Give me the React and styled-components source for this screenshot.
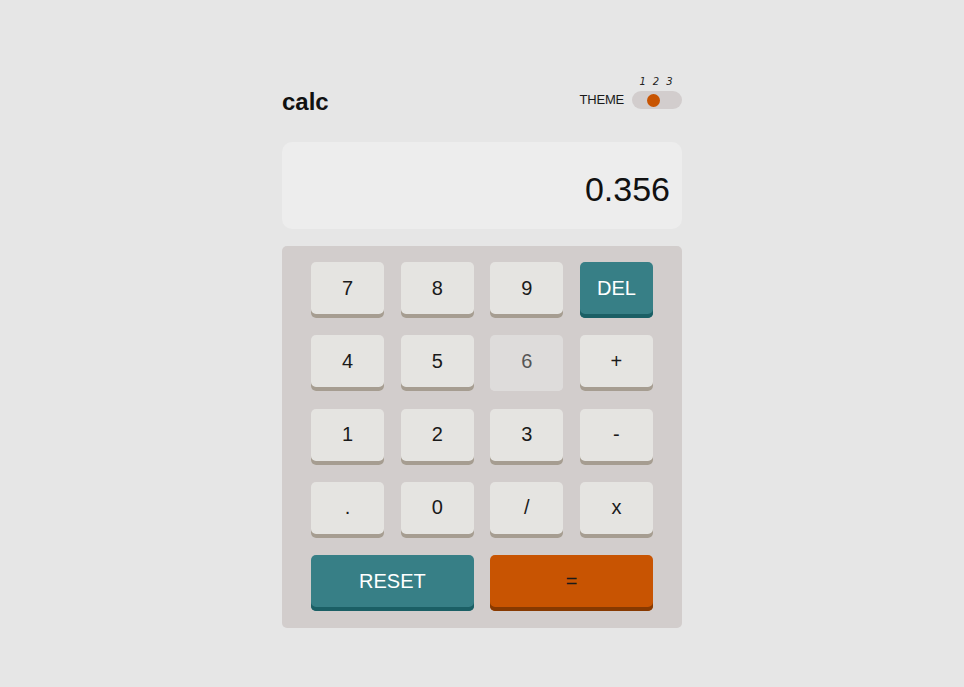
import styled, { createGlobalStyle } from 'styled-components';

const GlobalStyle = createGlobalStyle`
  * { box-sizing: border-box; }
  body {
    margin: 0;
    background: #e6e6e6;
    font-family: "Liberation Sans", Arial, sans-serif;
    color: #1a1a1a;
  }
`;

const Page = styled.main`
  min-height: 100vh;
  display: flex;
  justify-content: center;
  padding-top: 76px;
`;

const Calculator = styled.div`
  width: 400px;
`;

const Header = styled.header`
  display: flex;
  justify-content: space-between;
  align-items: flex-end;
`;

const Logo = styled.h1`
  margin: 0 0 -5px;
  font-size: 24px;
  line-height: 24px;
  font-weight: 700;
  color: #111;
`;

const ThemeSwitch = styled.div`
  display: flex;
  align-items: flex-end;
  gap: 8px;
`;

const ThemeLabel = styled.span`
  font-size: 13px;
  line-height: 18px;
  color: #1a1a1a;
  letter-spacing: -0.2px;
`;

const ToggleBox = styled.div`
  display: flex;
  flex-direction: column;
  gap: 3px;
  width: 50px;
`;

const Steps = styled.div`
  display: grid;
  grid-template-columns: repeat(3, 1fr);
  padding: 0 6px 0 4px;
  font-size: 10px;
  line-height: 12px;
  font-family: "DejaVu Sans", sans-serif;
  font-style: italic;
  color: #222;
  text-align: center;
`;

const Track = styled.div`
  display: grid;
  grid-template-columns: repeat(3, 1fr);
  align-items: center;
  justify-items: center;
  height: 18px;
  padding: 0 8px 0 2px;
  border-radius: 9px;
  background: #d2cdcd;
`;

const Knob = styled.span`
  grid-column: ${({ $pos }) => $pos};
  width: 13px;
  height: 13px;
  border-radius: 50%;
  background: #c85402;
`;

const Screen = styled.div`
  margin-top: 33px;
  height: 87px;
  border-radius: 10px;
  background: #ededed;
  display: flex;
  align-items: center;
  justify-content: flex-end;
  padding: 7px 12px 0 20px;
  font-size: 34px;
  color: #111;
`;

const Keypad = styled.div`
  margin-top: 17px;
  background: #d2cdcc;
  border-radius: 5px;
  padding: 16px 29px 17px;
  display: grid;
  grid-template-columns: repeat(4, 1fr);
  grid-auto-rows: 56px;
  column-gap: 16.5px;
  row-gap: 17.3px;
`;

const variants = {
  num: { bg: '#e5e4e1', shade: '#a69d91', color: '#1a1a1a' },
  hover: { bg: '#dedcdb', shade: '#dedcdb', color: '#555' },
  del: { bg: '#377f86', shade: '#1b5f65', color: '#fff' },
  equal: { bg: '#c85402', shade: '#873901', color: '#1a1a1a' },
};

const Key = styled.button`
  grid-column: span ${({ $span }) => $span || 1};
  border: none;
  border-radius: 5px;
  font-family: "Liberation Sans", Arial, sans-serif;
  font-size: 20px;
  padding: 0 0 4px;
  cursor: pointer;
  background: ${({ $v }) => variants[$v].bg};
  color: ${({ $v }) => variants[$v].color};
  box-shadow: inset 0 -4px 0 ${({ $v }) => variants[$v].shade};
`;

const keys = [
  ['7'], ['8'], ['9'], ['DEL', 'del'],
  ['4'], ['5'], ['6', 'hover'], ['+'],
  ['1'], ['2'], ['3'], ['-'],
  ['.'], ['0'], ['/'], ['x'],
  ['RESET', 'del', 2], ['=', 'equal', 2],
];

export default function App() {
  return (
    <>
      <GlobalStyle />
      <Page>
        <Calculator>
          <Header>
            <Logo>calc</Logo>
            <ThemeSwitch>
              <ThemeLabel>THEME</ThemeLabel>
              <ToggleBox>
                <Steps>
                  <span>1</span>
                  <span>2</span>
                  <span>3</span>
                </Steps>
                <Track>
                  <Knob $pos={2} />
                </Track>
              </ToggleBox>
            </ThemeSwitch>
          </Header>
          <Screen>0.356</Screen>
          <Keypad>
            {keys.map(([label, v = 'num', span]) => (
              <Key key={label} $v={v} $span={span}>
                {label}
              </Key>
            ))}
          </Keypad>
        </Calculator>
      </Page>
    </>
  );
}
